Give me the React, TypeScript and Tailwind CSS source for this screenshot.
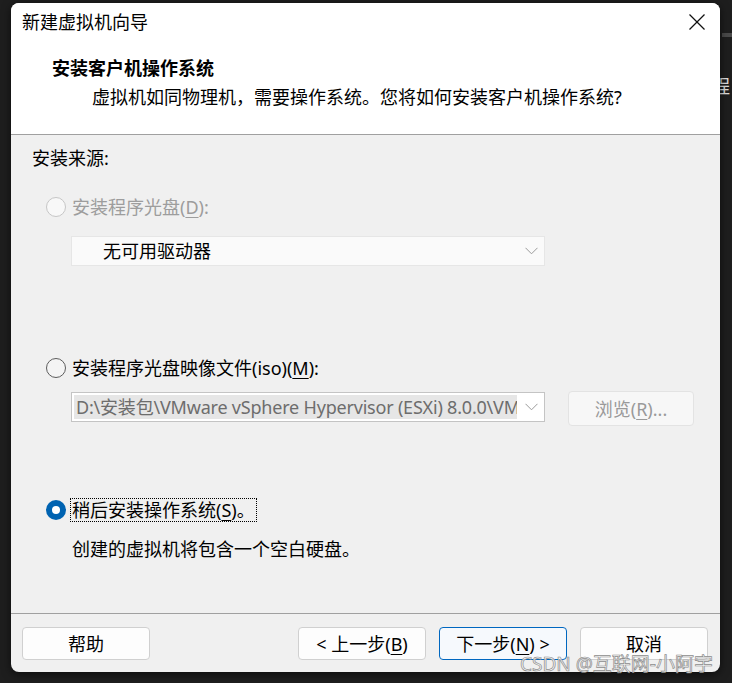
import React from "react";

const F = "font-['Noto_Sans','Noto_Sans_CJK_SC',sans-serif]";

function Chevron() {
  return (
    <svg width="13" height="8" viewBox="0 0 13 8" className="shrink-0">
      <polyline points="0.5,0.8 6.5,6.8 12.5,0.8" fill="none" stroke="#9a9a9a" strokeWidth="1" />
    </svg>
  );
}

function Radio({ state }: { state: "disabled" | "off" | "on" }) {
  if (state === "on")
    return (
      <span className="w-[20px] h-[20px] rounded-full bg-[#0063b1] flex items-center justify-center shrink-0">
        <span className="w-[8px] h-[8px] rounded-full bg-white" />
      </span>
    );
  if (state === "disabled")
    return <span className="w-[20px] h-[20px] rounded-full border border-[#c6c6c6] bg-[#f8f8f8] shrink-0" />;
  return <span className="w-[20px] h-[20px] rounded-full border border-[#5c5c5c] bg-[#f4f4f4] shrink-0" />;
}

function U({ children }: { children: React.ReactNode }) {
  return <span className="underline underline-offset-[3px] decoration-1">{children}</span>;
}

function Btn({ children, primary }: { children: React.ReactNode; primary?: boolean }) {
  return (
    <div
      className={
        "w-[128px] h-[33px] rounded-[4px] border flex items-center justify-center text-[18px] leading-[24px] text-black " +
        (primary ? "border-[#0067c0] bg-[#f6f9fd]" : "border-[#d0d0d0] bg-[#fdfdfd]")
      }
    >
      {children}
    </div>
  );
}

export default function App() {
  return (
    <div className={"relative w-[732px] h-[683px] bg-[#1e1e1e] overflow-hidden pl-[11px] pt-[3px] " + F}>
      <div className="absolute left-[722px] top-[33px] w-[10px] h-[4px] bg-[#4a4a4a]" />
      <span className="absolute left-[712px] top-[74px] text-[18px] leading-[24px] text-[#e0e0e0]">程</span>

      <div className="relative z-10 w-[709px] h-[669px] rounded-[8px] overflow-hidden flex flex-col bg-[#f0f0f0] shadow-[0_2px_10px_rgba(0,0,0,0.6)]">
        {/* white header */}
        <div className="h-[131px] bg-white border-b border-[#a0a0a0] box-content shrink-0">
          <div className="h-[38px] flex items-center justify-between pl-[11px] pr-[15px]">
            <span className="text-[18px] leading-[24px] text-black">新建虚拟机向导</span>
            <svg width="16" height="16" viewBox="0 0 16 16">
              <line x1="0.5" y1="0.5" x2="15.5" y2="15.5" stroke="#111" strokeWidth="1.2" />
              <line x1="15.5" y1="0.5" x2="0.5" y2="15.5" stroke="#111" strokeWidth="1.2" />
            </svg>
          </div>
          <div className="mt-[15px] pl-[41px] text-[18px] leading-[24px] font-bold text-black">安装客户机操作系统</div>
          <div className="mt-[5px] pl-[81px] text-[18px] leading-[24px] text-black">
            虚拟机如同物理机，需要操作系统。您将如何安装客户机操作系统?
          </div>
        </div>

        {/* body */}
        <div className="h-[478px] shrink-0 pl-[21px] pt-[11px] text-[18px] leading-[24px] text-black">
          <div className="h-[24px]">安装来源:</div>

          <div className="mt-[25px] ml-[14px] h-[24px] flex items-center">
            <Radio state="disabled" />
            <span className="ml-[6px] text-[#9d9d9d]">
              安装程序光盘(<U>D</U>):
            </span>
          </div>

          <div className="mt-[17px] ml-[39px] w-[474px] h-[30px] bg-[#fafafa] border border-[#e6e6e6] flex items-center justify-between pl-[31px] pr-[6px]">
            <span>无可用驱动器</span>
            <Chevron />
          </div>

          <div className="mt-[90px] ml-[14px] h-[24px] flex items-center">
            <Radio state="off" />
            <span className="ml-[6px]">
              安装程序光盘映像文件(iso)(<U>M</U>):
            </span>
          </div>

          <div className="mt-[11px] ml-[39px] flex items-start">
            <div className="mt-[1px] w-[474px] h-[30px] bg-white border border-[#c4c4c4] flex items-center justify-between pl-[2px] pr-[6px]">
              <span className="w-[443px] h-[24px] bg-[#e6e6e6] overflow-hidden whitespace-nowrap pl-[2px] text-[#6d6d6d] tracking-[-0.2px]">
                D:\安装包\VMware vSphere Hypervisor (ESXi) 8.0.0\VMw
              </span>
              <Chevron />
            </div>
            <div className="ml-[23px] w-[126px] h-[35px] rounded-[4px] bg-[#f7f7f7] border border-[#e3e3e3] flex items-center justify-center text-[#9a9a9a]">
              浏览(<U>R</U>)...
            </div>
          </div>

          <div className="mt-[72px] ml-[14px] h-[24px] flex items-center">
            <Radio state="on" />
            <span className="ml-[4px] px-[1px] h-[24px] leading-[22px] border border-dotted border-black">
              稍后安装操作系统(<U>S</U>)。
            </span>
          </div>

          <div className="mt-[15px] ml-[40px] h-[24px]">创建的虚拟机将包含一个空白硬盘。</div>
        </div>

        {/* footer */}
        <div className="flex-1 border-t border-[#a0a0a0] flex items-start justify-between pt-[13px] pl-[11px] pr-[12px]">
          <Btn>帮助</Btn>
          <div className="flex gap-[13px]">
            <Btn>
              &lt; 上一步(<U>B</U>)
            </Btn>
            <Btn primary>
              下一步(<U>N</U>) &gt;
            </Btn>
            <Btn>取消</Btn>
          </div>
        </div>
      </div>

      <div className="absolute z-20 left-[520px] top-[652px] text-[19px] leading-[24px] text-[#f7f7f7]/90 [-webkit-text-stroke:0.7px_#8c8c8c] whitespace-nowrap">
        CSDN @互联网-小阿宇
      </div>
    </div>
  );
}
